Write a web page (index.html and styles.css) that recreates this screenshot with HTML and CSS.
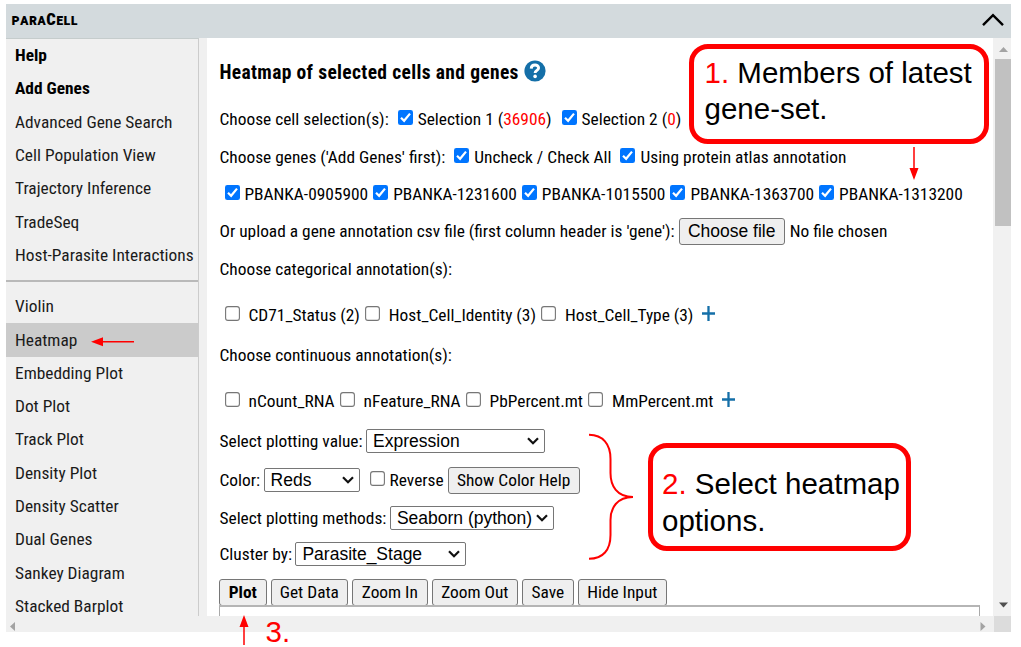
FILE: index.html
```
<!DOCTYPE html>
<html lang="en">
<head>
<meta charset="utf-8">
<title>paraCell</title>
<link rel="stylesheet" href="styles.css">
</head>
<body>
<svg class="defs" width="0" height="0">
  <symbol id="chev" viewBox="0 0 12 8"><path d="M1 1.2 L6 6.2 L11 1.2" fill="none" stroke="#111" stroke-width="2.2"/></symbol>
  <symbol id="tick" viewBox="0 0 15 15"><rect width="15" height="15" rx="2.3" fill="#0075ff"/><path d="M3 7.8 L6.1 10.8 L12 3.6" fill="none" stroke="#fff" stroke-width="2.2"/></symbol>
  <symbol id="box" viewBox="0 0 15 15"><rect x=".6" y=".6" width="13.8" height="13.8" rx="2.4" fill="#fff" stroke="#767676" stroke-width="1.1"/></symbol>
  <symbol id="plus" viewBox="0 0 13 15"><path d="M6.5 0V15M0 7.5H13" stroke="#146fa8" stroke-width="2.3"/></symbol>
</svg>
<div class="window">
  <header class="bar"><span class="brand">para<b>C</b>ell</span>
    <svg class="collapse" width="22" height="14" viewBox="0 0 22 14"><path d="M1 12.2 L11 2.2 L21 12.2" fill="none" stroke="#000" stroke-width="2.4"/></svg>
  </header>
  <div class="body">
    <nav class="side">
      <a class="strong">Help</a><a class="strong">Add Genes</a><a>Advanced Gene Search</a><a>Cell Population View</a><a>Trajectory Inference</a><a>TradeSeq</a><a>Host-Parasite Interactions</a>
      <hr>
      <a>Violin</a><a class="active">Heatmap</a><a>Embedding Plot</a><a>Dot Plot</a><a>Track Plot</a><a>Density Plot</a><a>Density Scatter</a><a>Dual Genes</a><a>Sankey Diagram</a><a>Stacked Barplot</a>
    </nav>
    <main class="panel">
      <h1 class="row">Heatmap of selected cells and genes
        <svg class="help" width="22" height="22" viewBox="0 0 22 22"><circle cx="11" cy="11" r="10.6" fill="#146fa8"/><path d="M7.2 8.6 C7.4 3.9 14.6 4 14.6 8 C14.6 10.4 11.1 10.5 11.1 13.1" fill="none" stroke="#fff" stroke-width="2.9"/><circle cx="11.1" cy="16.4" r="1.8" fill="#fff"/></svg>
      </h1>
      <div class="row"><span class="t">Choose cell selection(s):</span><svg class="ck g9"><use href="#tick"/></svg><span class="t">Selection 1 (<i>36906</i>)</span><svg class="ck g10"><use href="#tick"/></svg><span class="t">Selection 2 (<i>0</i>)</span></div>
      <div class="row"><span class="t">Choose genes ('Add Genes' first):</span><svg class="ck g9"><use href="#tick"/></svg><span class="t">Uncheck / Check All</span><svg class="ck g9"><use href="#tick"/></svg><span class="t">Using protein atlas annotation</span></div>
      <div class="row inset"><svg class="ck"><use href="#tick"/></svg><span class="t">PBANKA-0905900</span><svg class="ck"><use href="#tick"/></svg><span class="t">PBANKA-1231600</span><svg class="ck"><use href="#tick"/></svg><span class="t">PBANKA-1015500</span><svg class="ck"><use href="#tick"/></svg><span class="t">PBANKA-1363700</span><svg class="ck"><use href="#tick"/></svg><span class="t">PBANKA-1313200</span></div>
      <div class="row"><span class="t">Or upload a gene annotation csv file (first column header is 'gene'):</span><span class="btn file">Choose file</span><span class="t">No file chosen</span></div>
      <div class="row"><span class="t">Choose categorical annotation(s):</span></div>
      <div class="row inset wide"><svg class="ck"><use href="#box"/></svg><span class="t">CD71_Status (2)</span><svg class="ck"><use href="#box"/></svg><span class="t">Host_Cell_Identity (3)</span><svg class="ck"><use href="#box"/></svg><span class="t">Host_Cell_Type (3)</span><svg class="plus"><use href="#plus"/></svg></div>
      <div class="row"><span class="t">Choose continuous annotation(s):</span></div>
      <div class="row inset wide"><svg class="ck"><use href="#box"/></svg><span class="t">nCount_RNA</span><svg class="ck"><use href="#box"/></svg><span class="t">nFeature_RNA</span><svg class="ck"><use href="#box"/></svg><span class="t">PbPercent.mt</span><svg class="ck"><use href="#box"/></svg><span class="t">MmPercent.mt</span><svg class="plus"><use href="#plus"/></svg></div>
      <div class="row"><span class="t">Select plotting value:</span><span class="sel s-value">Expression<svg><use href="#chev"/></svg></span></div>
      <div class="row"><span class="t">Color:</span><span class="sel s-color">Reds<svg><use href="#chev"/></svg></span><svg class="ck g10"><use href="#box"/></svg><span class="t">Reverse</span><span class="btn colorhelp">Show Color Help</span></div>
      <div class="row"><span class="t">Select plotting methods:</span><span class="sel s-method">Seaborn (python)<svg><use href="#chev"/></svg></span></div>
      <div class="row"><span class="t">Cluster by:</span><span class="sel s-cluster">Parasite_Stage<svg><use href="#chev"/></svg></span></div>
      <div class="row buttons"><span class="btn b1">Plot</span><span class="btn b2">Get Data</span><span class="btn b3">Zoom In</span><span class="btn b4">Zoom Out</span><span class="btn b5">Save</span><span class="btn b6">Hide Input</span></div>
      <div class="output"></div>
    </main>
    <div class="vscroll"><svg width="18" height="578" viewBox="0 0 18 578"><rect x="2" y="21" width="16" height="167" fill="#c1c1c1"/><path d="M6 14L10.5 9L15 14Z" fill="#a3a3a3"/><path d="M6 564.5L10.5 569.5L15 564.5Z" fill="#505050"/></svg></div>
  </div>
  <footer class="hscroll">
    <svg width="988" height="16" viewBox="0 0 988 16"><path d="M9 6L4 10.5L9 15Z" fill="#a3a3a3"/><path d="M974.5 6L979.5 10.5L974.5 15Z" fill="#a3a3a3"/></svg><span class="corner"></span>
  </footer>
</div>
<div class="note note-genes"><i>1.</i> Members of latest<br>gene-set.</div>
<div class="note note-options"><i>2.</i> Select heatmap<br>options.</div>
<div class="step"><i>3.</i></div>
<svg class="marks" width="1021" height="647" viewBox="0 0 1021 647">
  <g stroke="#f00" fill="none" stroke-width="1.5">
    <path d="M914 147V171M134 341.7H101M244 645V624"/>
    <path stroke-width="2" d="M589 434.8 C603 435 610.5 444 610.5 459 V473 C610.5 486 617 497 633 497 C617 497 610.5 508 610.5 520 V535 C610.5 550 603 558.8 589 558.8"/>
  </g>
  <path d="M909.5 168H918.5L914 180ZM103 337.2V346.2L91 341.7ZM239.5 627H248.5L244 615Z" fill="#f00"/>
</svg>
</body>
</html>
```
FILE: styles.css
```
body { margin: 0; width: 1021px; height: 647px; overflow: hidden; background: #fff; position: relative;
  font: 17.37px/20px "Roboto Condensed", Roboto, "Liberation Sans", sans-serif; font-stretch: 75%; color: #000; }
i { font-style: normal; color: #f00; }
.defs { position: absolute; }
.window { margin-left: 5.5px; width: 1005.5px; padding-top: 4px; }
.bar { height: 34px; background: #d3dadd; display: flex; align-items: center; justify-content: space-between; padding: 0 7px 2px 6px; box-sizing: border-box; }
.brand { font-weight: 700; font-variant: small-caps; font-size: 16.5px; letter-spacing: .35px; }
.collapse { margin-top: -1px; }
.body { display: flex; height: 578px; overflow: hidden; background: #f0f0f0; }
.side { width: 193px; flex: none; border-right: 1px solid #ccc; border-top: 1px solid #c5cccc; box-sizing: border-box; height: 578px; margin-right: 8.5px; white-space: nowrap; }
.side a { display: flex; align-items: center; height: 33.3px; box-sizing: border-box; padding: 0 0 1px 9.5px; color: #1a1a1a; }
.side .strong { font-weight: 700; color: #000; }
.side .active { background: #cbcbcb; }
.side hr { border: 0; height: 2px; background: #b9b9b9; margin: 8px 0 8px; }
.panel { width: 786px; flex: none; background: #fff; padding-left: 12.5px; box-sizing: border-box; display: grid; align-content: start;
  grid-template-rows: 52px 47px 38px 37px 37px 38px 46px 40px 46px 40px 39px 38px 36px 38px 20px; }
.row { height: 36px; align-self: end; display: flex; align-items: center; white-space: nowrap; }
h1 { margin: 0; padding-top: 2px; box-sizing: border-box; font-size: 19.5px; font-weight: 700; letter-spacing: .35px; }
.help { margin: -5px 0 0 5px; }
.ck { width: 15px; height: 15px; margin: -3px 5px 0 5px; flex: none; }
.g9 { margin-left: 9px; } .g10 { margin-left: 10px; }
.inset .ck { margin-top: -4px; }
.inset .ck:first-child { margin-left: 5px; }
.wide .ck { margin-right: 9px; margin-top: -3px; }
.plus { width: 13px; height: 15px; margin: -4px 0 0 9px; }
.btn { box-sizing: border-box; height: 27px; border: 1px solid #767676; border-radius: 3px; background: #efefef; display: flex; align-items: center; justify-content: center; }
.file { font: 17.5px "Liberation Sans", sans-serif; width: 106px; margin: 0 5px 0 4px; }
.sel { box-sizing: border-box; height: 24px; border: 1px solid #767676; border-radius: 2px; display: flex; align-items: center; justify-content: space-between; padding: 0 5px 0 6px; margin-left: 3.5px; font: 17.5px "Liberation Sans", sans-serif; }
.sel svg { width: 12px; height: 8px; }
.s-value { width: 179px; } .s-color { width: 96px; } .s-method { width: 164px; } .s-cluster { width: 171px; }
.colorhelp { width: 132px; margin-left: 4px; }
.buttons { gap: 4px; margin-left: -.7px; }
.b1 { width: 48px; font-weight: 700; } .b2 { width: 77px; } .b3 { width: 76px; } .b4 { width: 86px; } .b5 { width: 52px; } .b6 { width: 89px; }
.output { width: 761px; box-sizing: border-box; border: 1px solid #aaa; border-top: 2px solid #b5b5b5; margin: -5px 0 0 -.7px; height: 30px; }
.vscroll { width: 18px; background: #f1f1f1; }
.hscroll { height: 16px; display: flex; background: #f0f0f0; }
.corner { flex: 1; background: #dcdcdc; }
.note, .step { position: absolute; font: 29.5px/36.5px "Liberation Sans", sans-serif; white-space: nowrap; }
.note { box-sizing: border-box; border: 5px solid #f00; border-radius: 19px; background: #fff; }
.note-genes { left: 689px; top: 43.5px; width: 300px; height: 100.5px; padding: 6px 0 0 10.5px; }
.note-options { left: 648px; top: 443px; width: 263px; height: 107.5px; padding: 18px 0 0 9px; }
.step { left: 265.5px; top: 614px; }
.marks { position: absolute; left: 0; top: 0; }
```
